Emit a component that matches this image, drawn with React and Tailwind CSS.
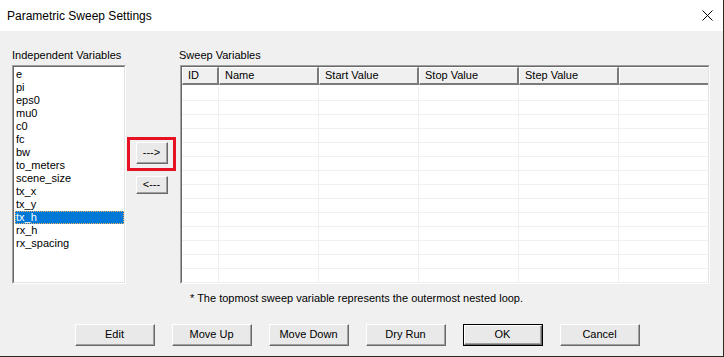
import React from 'react';

const variables = [
  'e', 'pi', 'eps0', 'mu0', 'c0', 'fc', 'bw', 'to_meters', 'scene_size',
  'tx_x', 'tx_y', 'tx_h', 'rx_h', 'rx_spacing',
];

const columns = [
  { label: 'ID', w: 'w-[37px]' },
  { label: 'Name', w: 'w-[100px]' },
  { label: 'Start Value', w: 'w-[100px]' },
  { label: 'Stop Value', w: 'w-[100px]' },
  { label: 'Step Value', w: 'w-[100px]' },
  { label: '', w: 'flex-1' },
];

const rows = Array.from({ length: 14 }, (_, i) => i);

// classic raised push button
const Button = ({ children, className = '', isDefault = false }) => (
  <div className={`${isDefault ? 'border border-[#000]' : ''} ${className}`}>
    <div className="h-full border-t border-l border-white border-b border-r border-b-[#696969] border-r-[#696969]">
      <div className="h-full flex items-center justify-center bg-[#e9e9e9] border-b border-r border-[#a0a0a0] text-[11px] text-black">
        {children}
      </div>
    </div>
  </div>
);

// sunken frame used by list box and grid
const Sunken = ({ children, className = '' }) => (
  <div className={`border-t border-l border-[#a0a0a0] border-b border-r border-b-white border-r-white ${className}`}>
    <div className="h-full border-t border-l border-[#696969] border-b border-r border-b-[#e3e3e3] border-r-[#e3e3e3] bg-white">
      {children}
    </div>
  </div>
);

const App = () => {
  return (
    <div className="w-[724px] h-[357px] bg-[#2e2a22] overflow-hidden" style={{ fontFamily: '"Liberation Sans", Arial, sans-serif' }}>
      <div className="w-[723px] h-[356px] bg-[#f0f0f0] flex flex-col">
        {/* title bar */}
        <div className="h-[31px] bg-white flex items-center justify-between pl-[7px] pr-[10px]">
          <span className="text-[12px] text-black">Parametric Sweep Settings</span>
          <svg width="11" height="11" viewBox="0 0 11 11" className="mr-[0px]">
            <path d="M0.5 0.5 L10.5 10.5 M10.5 0.5 L0.5 10.5" stroke="#000" strokeWidth="1" />
          </svg>
        </div>

        {/* main area */}
        <div className="flex pl-[12px] pt-[18px]">
          {/* independent variables */}
          <div className="w-[114px] flex flex-col">
            <div className="h-[16px] text-[11px] leading-[13px] text-black">Independent Variables</div>
            <Sunken className="h-[219px]">
              <div className="pt-[1px] pl-[1px]">
                {variables.map((v) =>
                  v === 'tx_h' ? (
                    <div
                      key={v}
                      className="h-[13px] leading-[13px] text-[11px] pl-[1px] bg-[#0078d7] text-white outline-1 outline-dotted outline-[#f5b461] -outline-offset-1"
                    >
                      {v}
                    </div>
                  ) : (
                    <div key={v} className="h-[13px] leading-[13px] text-[11px] pl-[1px] text-black">
                      {v}
                    </div>
                  )
                )}
              </div>
            </Sunken>
          </div>

          {/* move buttons */}
          <div className="w-[54px] pt-[88px] pl-[1px]">
            <div className="w-[49px] h-[34px] border-[3px] border-[#e81123] pl-[6px] pt-[2px]">
              <Button className="w-[32px] h-[22px]">---&gt;</Button>
            </div>
            <Button className="w-[32px] h-[18px] mt-[5px] ml-[9px]">&lt;---</Button>
          </div>

          {/* sweep variables */}
          <div className="flex flex-col">
            <div className="h-[16px] text-[11px] leading-[13px] text-black -ml-[1px]">Sweep Variables</div>
            <Sunken className="w-[530px] h-[219px]">
              <div className="flex h-[18px] bg-[#f0f0f0]">
                {columns.map((c, i) => (
                  <div
                    key={i}
                    className={`${c.w} border-t border-l border-white ${c.label ? 'border-b-2 border-r-2' : 'border-b-2'} border-b-[#7a7a7a] border-r-[#7a7a7a] text-[11px] leading-[14px] pl-[5px] text-black`}
                  >
                    {c.label}
                  </div>
                ))}
              </div>
              <div className="pt-[2px]">
                {rows.map((r) => (
                  <div key={r} className="flex h-[14px] border-b border-[#f0f0f0]">
                    {columns.map((c, i) => (
                      <div key={i} className={`${c.w} ${i < columns.length - 1 ? 'border-r border-[#f0f0f0]' : ''}`} />
                    ))}
                  </div>
                ))}
              </div>
            </Sunken>
          </div>
        </div>

        <div className="pl-[190px] pt-[8px] text-[11px] leading-[13px] text-black">
          * The topmost sweep variable represents the outermost nested loop.
        </div>

        {/* bottom buttons */}
        <div className="flex pl-[75px] pt-[19px] gap-[17px]">
          <Button className="w-[80px] h-[22px]">Edit</Button>
          <Button className="w-[80px] h-[22px]">Move Up</Button>
          <Button className="w-[80px] h-[22px]">Move Down</Button>
          <Button className="w-[80px] h-[22px]">Dry Run</Button>
          <Button className="w-[80px] h-[22px]" isDefault>OK</Button>
          <Button className="w-[80px] h-[22px]">Cancel</Button>
        </div>
      </div>
    </div>
  );
};

export default App;
